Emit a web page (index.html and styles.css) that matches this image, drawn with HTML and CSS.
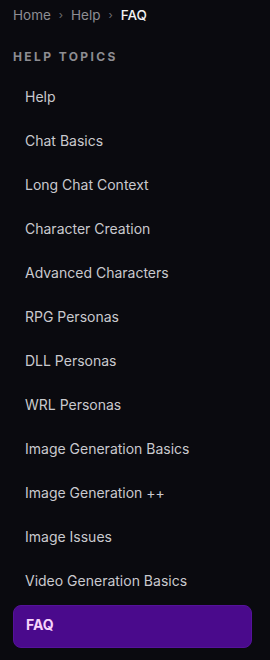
FILE: index.html
```html
<!DOCTYPE html>
<html lang="en">
  <head>
    <meta charset="UTF-8" />
    <meta name="viewport" content="width=device-width, initial-scale=1.0" />
    <title>FAQ - Help</title>
    <link rel="stylesheet" href="styles.css">
  </head>
  <body>
    <div class="sidebar">
      <div class="breadcrumb">
        <a href="#">Home</a>
        <span class="sep">›</span>
        <a href="#">Help</a>
        <span class="sep">›</span>
        <span class="current">FAQ</span>
      </div>

      <h2 class="topics-title">Help Topics</h2>

      <nav class="topics">
        <a class="topic" href="#">Help</a>
        <a class="topic" href="#">Chat Basics</a>
        <a class="topic" href="#">Long Chat Context</a>
        <a class="topic" href="#">Character Creation</a>
        <a class="topic" href="#">Advanced Characters</a>
        <a class="topic" href="#">RPG Personas</a>
        <a class="topic" href="#">DLL Personas</a>
        <a class="topic" href="#">WRL Personas</a>
        <a class="topic" href="#">Image Generation Basics</a>
        <a class="topic" href="#">Image Generation ++</a>
        <a class="topic" href="#">Image Issues</a>
        <a class="topic" href="#">Video Generation Basics</a>
        <a class="topic active" href="#">FAQ</a>
      </nav>
    </div>
  </body>
</html>
```

FILE: styles.css
```css
* {
  margin: 0;
  padding: 0;
  box-sizing: border-box;
  font-family: Inter, "Noto Sans", sans-serif;
}

body {
  background: #0a0a0f;
  color: #c9c9ce;
  overflow: hidden;
}

.sidebar {
  padding: 6px 18px 0 13px;
}

.breadcrumb {
  display: flex;
  align-items: center;
  gap: 8px;
  font-size: 13.5px;
  line-height: 18px;
  color: #8e8e94;
}

.breadcrumb a {
  color: #8e8e94;
  text-decoration: none;
}

.breadcrumb .sep {
  font-size: 11px;
  color: #6e6e74;
}

.breadcrumb .current {
  color: #f2f2f4;
  font-weight: 500;
}

.topics-title {
  margin-top: 25px;
  font-size: 12px;
  line-height: 16px;
  font-weight: 700;
  letter-spacing: 2.4px;
  text-transform: uppercase;
  color: #8d8d92;
}

.topics {
  display: flex;
  flex-direction: column;
  margin-top: 10px;
}

.topic {
  display: block;
  padding: 12px 12px;
  font-size: 14px;
  line-height: 20px;
  color: #c9c9ce;
  text-decoration: none;
  border-radius: 8px;
}

.topic.active {
  margin-top: 2px;
  height: 43px;
  padding-top: 9px;
  background: #4a0a8c;
  border: 1px solid #55129a;
  color: #f7d4fb;
  font-weight: 700;
}
```
